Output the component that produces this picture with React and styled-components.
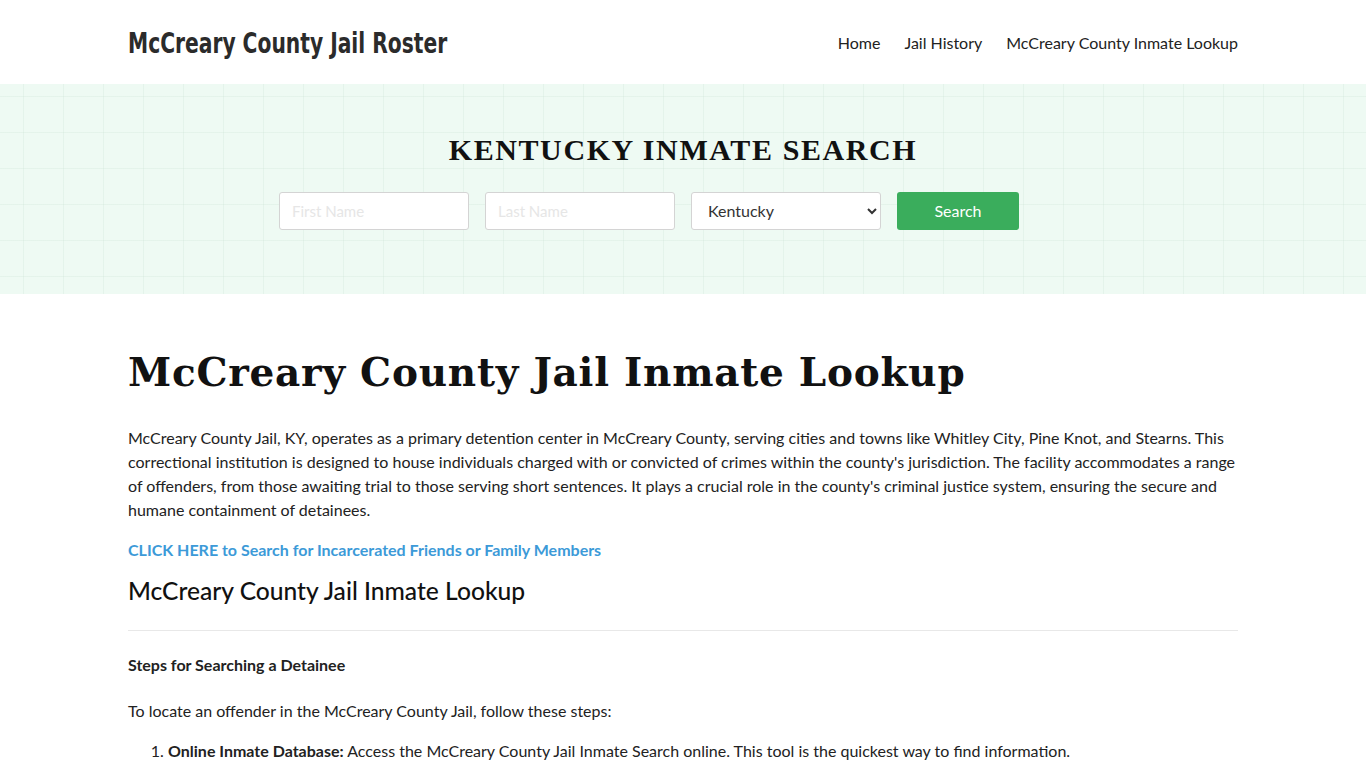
import styled, { createGlobalStyle } from "styled-components";

const GlobalStyle = createGlobalStyle`
  body {
    margin: 0;
    background: #ffffff;
    font-family: Lato, "Open Sans", sans-serif;
    color: #222222;
  }
  * { box-sizing: border-box; }
`;

export default function App() {
  return (
    <>
      <GlobalStyle />
      <Header>
        <Container>
          <HeaderRow>
            <Logo href="#">McCreary County Jail Roster</Logo>
            <Nav>
              <NavLink href="#">Home</NavLink>
              <NavLink href="#">Jail History</NavLink>
              <NavLink href="#">McCreary County Inmate Lookup</NavLink>
            </Nav>
          </HeaderRow>
        </Container>
      </Header>

      <Hero>
        <HeroTitle>KENTUCKY INMATE SEARCH</HeroTitle>
        <SearchForm onSubmit={(e) => e.preventDefault()}>
          <Field placeholder="First Name" />
          <Field placeholder="Last Name" />
          <Select defaultValue="Kentucky">
            <option>Kentucky</option>
          </Select>
          <SearchButton type="submit">Search</SearchButton>
        </SearchForm>
      </Hero>

      <Container>
        <Main>
          <Title>McCreary County Jail Inmate Lookup</Title>
          <Text>
            McCreary County Jail, KY, operates as a primary detention center in McCreary County, serving cities and
            towns like Whitley City, Pine Knot, and Stearns. This correctional institution is designed to house
            individuals charged with or convicted of crimes within the county's jurisdiction. The facility
            accommodates a range of offenders, from those awaiting trial to those serving short sentences. It plays a
            crucial role in the county's criminal justice system, ensuring the secure and humane containment of
            detainees.
          </Text>
          <CallLink href="#">CLICK HERE to Search for Incarcerated Friends or Family Members</CallLink>
          <SubTitle>McCreary County Jail Inmate Lookup</SubTitle>
          <Divider />
          <Strong>Steps for Searching a Detainee</Strong>
          <Text>To locate an offender in the McCreary County Jail, follow these steps:</Text>
          <Steps>
            <li>
              <b>Online Inmate Database:</b> Access the McCreary County Jail Inmate Search online. This tool is the
              quickest way to find information.
            </li>
          </Steps>
        </Main>
      </Container>
    </>
  );
}

const Container = styled.div`
  width: 1110px;
  margin: 0 auto;
`
const Header = styled.header`
  height: 84px;
  background: #ffffff;
`
const HeaderRow = styled.div`
  height: 84px;
  display: flex;
  align-items: center;
  justify-content: space-between;
`
const Logo = styled.a`
  display: inline-block;
  font-family: "DejaVu Sans Condensed", "DejaVu Sans", sans-serif;
  font-stretch: condensed;
  font-weight: 700;
  font-size: 29px;
  color: #2b2b2b;
  text-decoration: none;
  margin-top: 2px;
  transform: scaleX(0.776);
  transform-origin: left center;
`
const Nav = styled.nav`
  display: flex;
  gap: 24px;
`
const NavLink = styled.a`
  font-size: 16px;
  color: #222222;
  text-decoration: none;
`
const Hero = styled.section`
  height: 210px;
  background-color: #eefaf3;
  background-image:
    linear-gradient(to right, rgba(200, 225, 210, 0.25) 1px, transparent 1px),
    linear-gradient(to bottom, rgba(200, 225, 210, 0.25) 1px, transparent 1px);
  background-size: 40px 36px;
  background-position: 23px 12px;
  display: flex;
  flex-direction: column;
  align-items: center;
  padding-top: 48px;
`
const HeroTitle = styled.h2`
  margin: 0;
  font-family: "Liberation Serif", serif;
  font-weight: 700;
  font-size: 30px;
  letter-spacing: 1.6px;
  color: #111111;
  line-height: 36px;
`
const SearchForm = styled.form`
  display: flex;
  gap: 16px;
  margin-top: 24px;
  margin-right: 68px;
`
const Field = styled.input`
  width: 190px;
  height: 38px;
  border: 1px solid #d4d4d4;
  border-radius: 3px;
  padding: 0 12px;
  font-family: Lato, sans-serif;
  font-size: 15px;
  background: #ffffff;
  &::placeholder { color: #e6e6e6; }
`
const Select = styled.select`
  width: 190px;
  height: 38px;
  border: 1px solid #d4d4d4;
  border-radius: 3px;
  padding: 0 12px 2px;
  font-family: Lato, sans-serif;
  font-size: 16px;
  color: #333333;
  background: #ffffff;
`
const SearchButton = styled.button`
  width: 122px;
  height: 38px;
  border: none;
  border-radius: 3px;
  background: #3aad5c;
  color: #ffffff;
  font-family: Lato, sans-serif;
  font-size: 16px;
  padding-bottom: 2px;
  cursor: pointer;
`
const Main = styled.main`
  padding-top: 50px;
`
const Title = styled.h1`
  margin: 0 0 26px;
  font-family: "DejaVu Serif", serif;
  font-weight: 700;
  font-size: 39px;
  letter-spacing: 0.75px;
  line-height: 56px;
  color: #111111;
`
const Text = styled.p`
  margin: 0 0 16px;
  font-size: 16px;
  line-height: 24px;
  color: #222222;
`
const CallLink = styled.a`
  display: block;
  font-size: 16px;
  font-weight: 700;
  color: #3c9ad8;
  text-decoration: none;
  line-height: 24px;
`
const SubTitle = styled.h2`
  margin: 12px 0 0;
  font-size: 24.6px;
  font-weight: 500;
  line-height: 34px;
  color: #111111;
`
const Divider = styled.hr`
  border: none;
  border-top: 1px solid #e8e8e8;
  margin: 22px 0 22px;
`
const Strong = styled.p`
  margin: 0 0 22px;
  font-size: 16px;
  font-weight: 700;
  line-height: 24px;
`
const Steps = styled.ol`
  margin: 0;
  padding-left: 40px;
  font-size: 16px;
  line-height: 24px;
  li { margin-bottom: 8px; }
`
